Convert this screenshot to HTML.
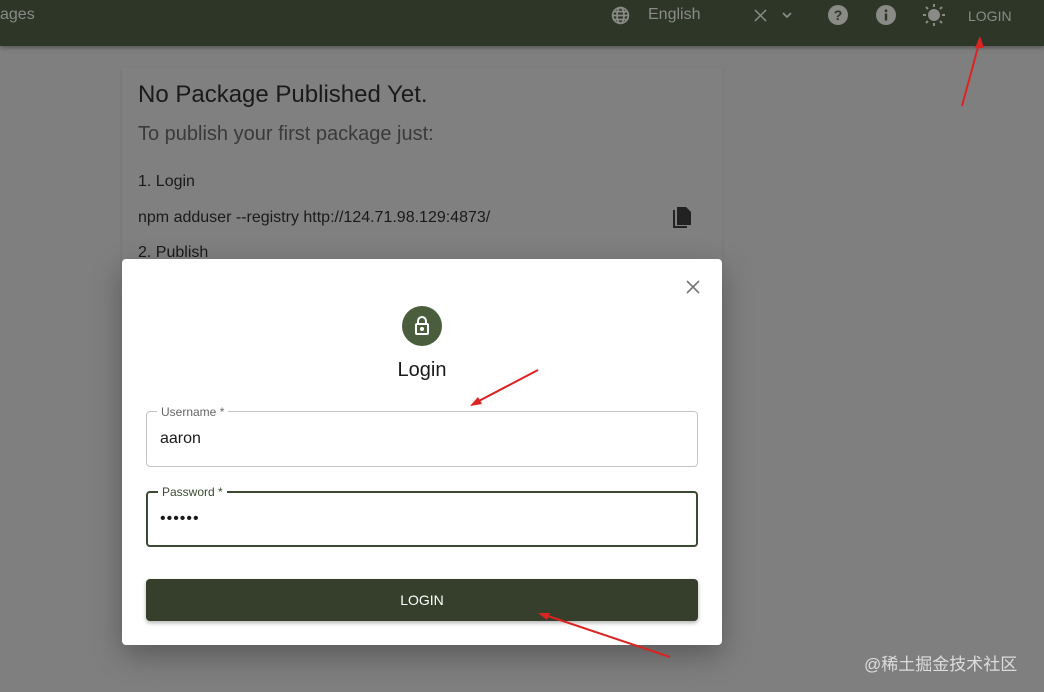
<!DOCTYPE html>
<html><head><meta charset="utf-8"><style>
*{box-sizing:border-box;margin:0;padding:0}
body{width:1044px;height:692px;overflow:hidden;background:#7f7f7f;font-family:"Liberation Sans",Arial,sans-serif;position:relative}
.hdr{position:absolute;left:0;top:0;width:1044px;height:46px;background:#2e3628;box-shadow:0 2px 4px rgba(0,0,0,.3)}
.hdr span{position:absolute;color:#8a8a86;font-size:16px}
.card{position:absolute;left:122px;top:68px;width:600px;height:200px;background:#808080;box-shadow:0 1px 3px rgba(0,0,0,.1)}
.t{position:absolute;color:#1a1a1a}
.modal{position:absolute;left:122px;top:259px;width:600px;height:386px;background:#fff;border-radius:4px;box-shadow:0 10px 30px rgba(0,0,0,.3)}
.fld{position:absolute;left:24px;width:552px;height:56px;border-radius:4px}
.lbl{position:absolute;left:10px;top:-7px;background:#fff;padding:0 4px;font-size:12px;color:#666}
</style></head><body>
<div class="hdr">
<span style="left:0;top:6px">ages</span>
<svg style="position:absolute;left:610px;top:5px" width="21" height="21" viewBox="0 0 24 24" fill="none" stroke="#8a8a86" stroke-width="2"><circle cx="12" cy="12" r="9"/><ellipse cx="12" cy="12" rx="4" ry="9"/><path d="M3 12h18M4.5 7.5h15M4.5 16.5h15"/></svg>
<span style="left:648px;top:6px">English</span>
<svg style="position:absolute;left:754px;top:9px" width="13" height="13" viewBox="0 0 14 14" stroke="#8a8a86" stroke-width="1.6"><path d="M1 1l12 12M13 1L1 13"/></svg>
<svg style="position:absolute;left:781px;top:10px" width="12" height="10" viewBox="0 0 12 10" fill="none" stroke="#8a8a86" stroke-width="1.8"><path d="M2 3l4 4 4-4"/></svg>
<svg style="position:absolute;left:828px;top:5px" width="20" height="20" viewBox="0 0 20 20"><circle cx="10" cy="10" r="10" fill="#8a8a86"/><text x="10" y="15" font-size="14" font-weight="bold" text-anchor="middle" fill="#2e3628" font-family="Liberation Sans">?</text></svg>
<svg style="position:absolute;left:876px;top:5px" width="20" height="20" viewBox="0 0 20 20"><circle cx="10" cy="10" r="10" fill="#8a8a86"/><rect x="8.8" y="8.5" width="2.4" height="7" fill="#2e3628"/><circle cx="10" cy="5.8" r="1.4" fill="#2e3628"/></svg>
<svg style="position:absolute;left:922px;top:3px" width="24" height="24" viewBox="0 0 24 24" fill="#8a8a86"><circle cx="12" cy="12" r="6"/><g stroke="#8a8a86" stroke-width="2"><path d="M12 1v3M12 20v3M1 12h3M20 12h3M4 4l2 2M18 18l2 2M4 20l2-2M18 6l2-2"/></g></svg>
<span style="left:968px;top:8px;font-size:14px">LOGIN</span>
</div>
<svg style="position:absolute;left:955px;top:34px" width="35" height="75"><path d="M7 72L25 6" stroke="#d22" stroke-width="2"/><path d="M25 2l-5 12 9 0z" fill="#d22"/></svg>
<div class="card">
<div class="t" style="left:16px;top:13px;font-size:24px">No Package Published Yet.</div>
<div class="t" style="left:16px;top:55px;font-size:20px;color:#3a3a3a">To publish your first package just:</div>
<div class="t" style="left:16px;top:105px;font-size:16px">1. Login</div>
<div class="t" style="left:16px;top:141px;font-size:16px">npm adduser --registry http://124.71.98.129:4873/</div>
<svg style="position:absolute;left:548px;top:138px" width="22" height="24" viewBox="0 0 22 24" fill="#222"><path d="M3 4h2v16h12v2H3z"/><path d="M7 1h9l5 5v13H7z"/></svg>
<div class="t" style="left:16px;top:176px;font-size:16px">2. Publish</div>
</div>
<div class="modal">
<svg style="position:absolute;left:564px;top:21px" width="14" height="14" stroke="#777" stroke-width="1.6"><path d="M1 1l12 12M13 1L1 13"/></svg>
<div style="position:absolute;left:280px;top:47px;width:40px;height:40px;border-radius:50%;background:#4a5e3e"></div>
<svg style="position:absolute;left:290px;top:56px" width="20" height="22" viewBox="0 0 20 22" fill="none" stroke="#fff" stroke-width="2"><path d="M6 9V6a4 4 0 0 1 8 0v3"/><rect x="4" y="9" width="12" height="10" rx="1"/><circle cx="10" cy="14" r="1" fill="#fff"/></svg>
<div class="t" style="left:0;width:600px;text-align:center;top:100px;font-size:20px">Login</div>
<div class="fld" style="top:152px;border:1px solid #c4c4c4"><div class="lbl">Username *</div><div class="t" style="left:13px;top:18px;font-size:16px">aaron</div></div>
<div class="fld" style="top:232px;border:2px solid #3a4a30"><div class="lbl" style="top:-8px;color:#3a4a30">Password *</div><div class="t" style="left:12px;top:17px;font-size:16px;letter-spacing:1px">••••••</div></div>
<div style="position:absolute;left:24px;top:320px;width:552px;height:42px;background:#353f2b;border-radius:4px;box-shadow:0 2px 4px rgba(0,0,0,.3);color:#fff;font-size:14px;text-align:center;line-height:42px">LOGIN</div>
</div>
<svg style="position:absolute;left:460px;top:365px" width="85" height="45"><path d="M78 5L15 38" stroke="#d22" stroke-width="2"/><path d="M10 41l12-2-4-7z" fill="#d22"/></svg>
<svg style="position:absolute;left:530px;top:605px" width="145" height="55"><path d="M140 52L15 10" stroke="#d22" stroke-width="2"/><path d="M8 8l12 0-3 7z" fill="#d22"/></svg>
<div style="position:absolute;left:864px;top:650px;font-size:17px;color:#ddd;font-family:'Liberation Sans','Noto Sans CJK SC',sans-serif">@稀土掘金技术社区</div>
</body></html>
